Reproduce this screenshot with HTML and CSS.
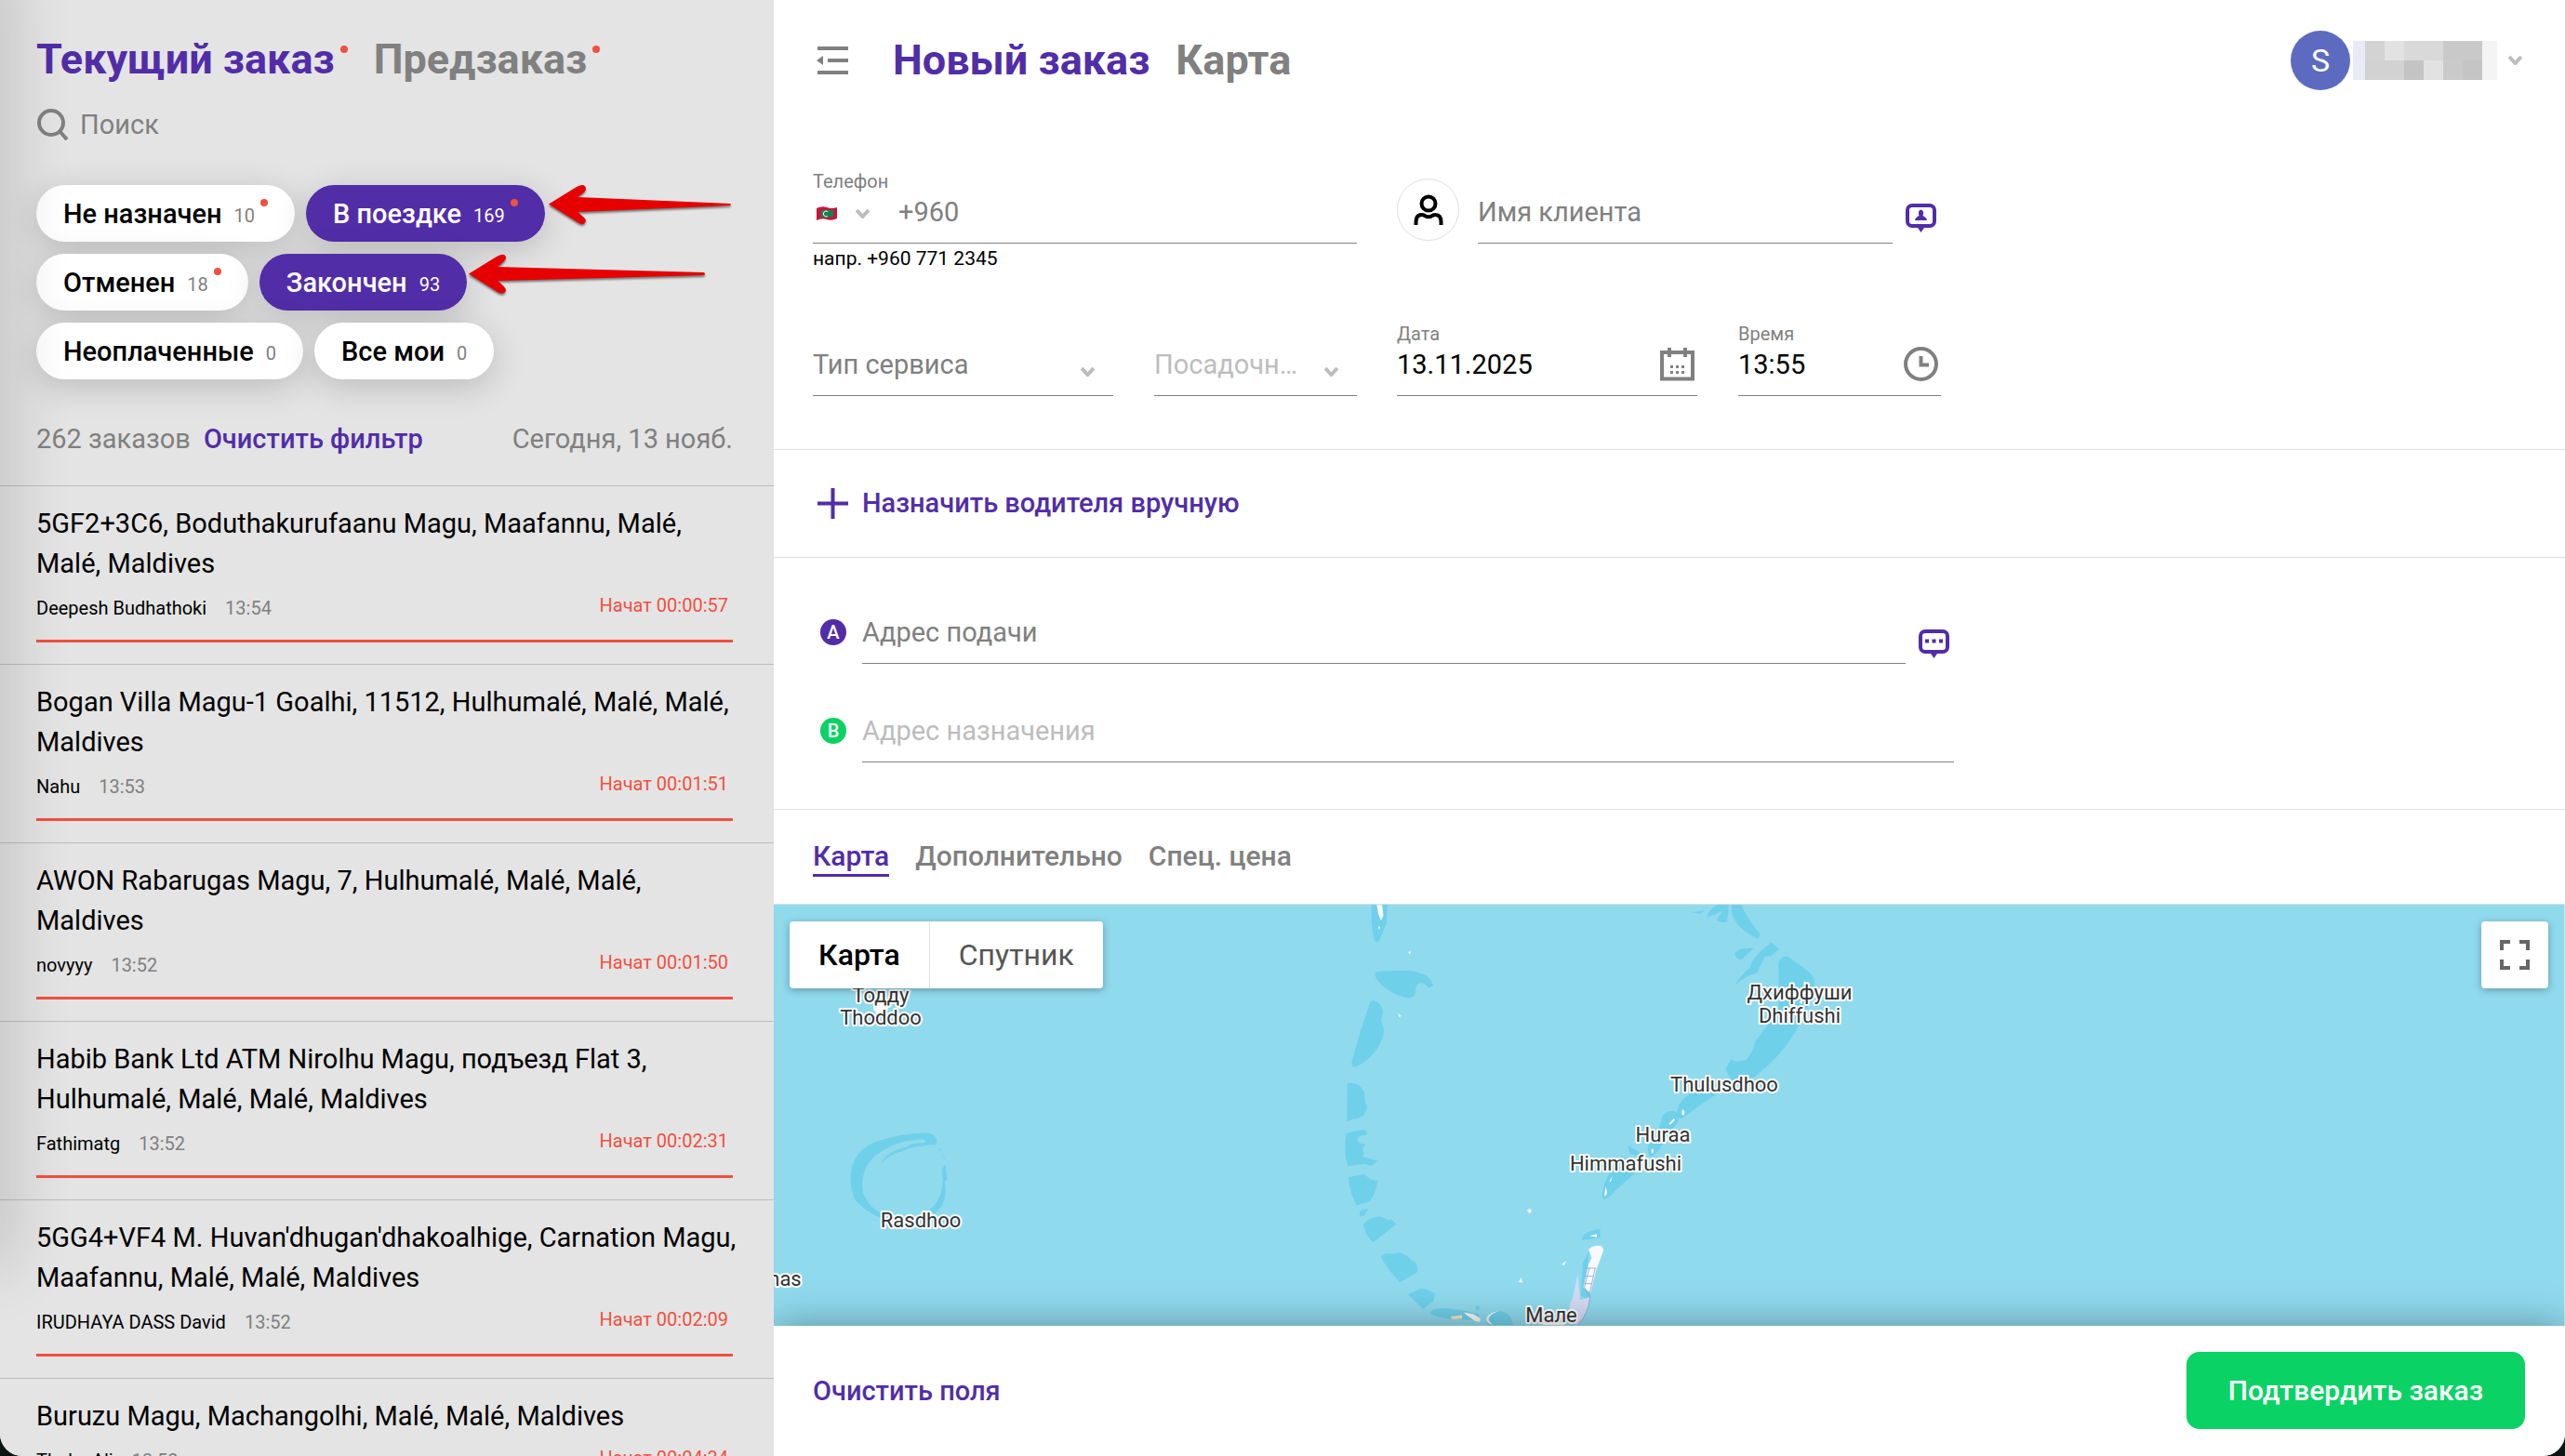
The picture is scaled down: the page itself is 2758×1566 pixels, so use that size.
FILE: index.html
```html
<!DOCTYPE html>
<html lang="ru">
<head>
<meta charset="utf-8">
<meta name="viewport" content="width=device-width, initial-scale=1">
<title>Новый заказ</title>
<link rel="stylesheet" href="styles.css">
</head>
<body>
<div class="app">
  <aside class="sidebar">
    <nav class="tabs sidebar-tabs">
      <a class="tab active" href="#current">Текущий заказ<i class="dot"></i></a>
      <a class="tab" href="#pre">Предзаказ<i class="dot"></i></a>
    </nav>
    <label class="search">
      <svg class="search-icon" viewBox="0 0 34 34"><circle cx="15" cy="15" r="13" /><path d="M24 24 L32 33" /></svg>
      <input class="search-input" type="text" placeholder="Поиск" aria-label="Поиск">
    </label>
    <div class="chips">
      <div class="chip-row">
        <button class="chip" type="button">Не назначен<span class="count">10</span><i class="dot"></i></button>
        <button class="chip selected" type="button">В поездке<span class="count">169</span><i class="dot"></i></button>
      </div>
      <div class="chip-row">
        <button class="chip" type="button">Отменен<span class="count">18</span><i class="dot"></i></button>
        <button class="chip selected" type="button">Закончен<span class="count">93</span></button>
      </div>
      <div class="chip-row">
        <button class="chip" type="button">Неоплаченные<span class="count">0</span></button>
        <button class="chip" type="button">Все мои<span class="count">0</span></button>
      </div>
      <svg class="arrows" viewBox="0 0 300 124">
        <g id="arrows">
          <path d="M101 20.500 L131 2 Q140 -3 141 4 Q141 7 132 13 L296 20 Q298 21 296 22 L132 29 Q141 36 141 38 Q139 45 132 40 Z" />
          <path d="M15 95.500 L45 77 Q54 72 55 78 Q55 81 46 88 L268 94 Q270 96 268 97 L46 103 Q55 110 55 113 Q53 119 46 115 Z" />
        </g>
      </svg>
    </div>
    <div class="summary">
      <span>262 заказов</span>
      <a class="link" href="#clear">Очистить фильтр</a>
      <span class="today">Сегодня, 13 нояб.</span>
    </div>
    <ul class="orders">
      <li class="order">
        <p class="address">5GF2+3C6, Boduthakurufaanu Magu, Maafannu, Malé, Malé, Maldives</p>
        <div class="meta"><span>Deepesh Budhathoki</span><time>13:54</time><span class="status">Начат 00:00:57</span></div>
        <div class="progress"></div>
      </li>
      <li class="order">
        <p class="address">Bogan Villa Magu-1 Goalhi, 11512, Hulhumalé, Malé, Malé, Maldives</p>
        <div class="meta"><span>Nahu</span><time>13:53</time><span class="status">Начат 00:01:51</span></div>
        <div class="progress"></div>
      </li>
      <li class="order">
        <p class="address">AWON Rabarugas Magu, 7, Hulhumalé, Malé, Malé, Maldives</p>
        <div class="meta"><span>novyyy</span><time>13:52</time><span class="status">Начат 00:01:50</span></div>
        <div class="progress"></div>
      </li>
      <li class="order">
        <p class="address">Habib Bank Ltd ATM Nirolhu Magu, подъезд Flat 3, Hulhumalé, Malé, Malé, Maldives</p>
        <div class="meta"><span>Fathimatg</span><time>13:52</time><span class="status">Начат 00:02:31</span></div>
        <div class="progress"></div>
      </li>
      <li class="order">
        <p class="address">5GG4+VF4 M. Huvan'dhugan'dhakoalhige, Carnation Magu, Maafannu, Malé, Malé, Maldives</p>
        <div class="meta"><span>IRUDHAYA DASS David</span><time>13:52</time><span class="status">Начат 00:02:09</span></div>
        <div class="progress"></div>
      </li>
      <li class="order">
        <p class="address">Buruzu Magu, Machangolhi, Malé, Malé, Maldives</p>
        <div class="meta"><span>Thoby Ali</span><time>13:52</time><span class="status">Начат 00:04:34</span></div>
        <div class="progress"></div>
      </li>
    </ul>
  </aside>

  <main class="main">
    <header class="topbar">
      <button class="icon-button" type="button" aria-label="Меню">
        <svg class="menu-icon" viewBox="0 0 34 30"><path d="M1 0H34V4H1Z M12 13H34V17H12Z M1 26H34V30H1Z M0 15L7 10V20Z" /></svg>
      </button>
      <nav class="tabs">
        <a class="tab active" href="#new">Новый заказ</a>
        <a class="tab" href="#map">Карта</a>
      </nav>
      <button class="account" type="button" aria-label="Аккаунт">
        <span class="avatar">S</span>
        <svg class="mosaic" viewBox="0 0 155 42" shape-rendering="crispEdges">
          <path fill="#e9e9f7" d="M0 0h13v21H0z"/><path fill="#e9ebf6" d="M0 21h13v21H0z"/>
          <path fill="#d3d3d3" d="M13 0h21v21H13z"/><path fill="#d2d2d2" d="M13 21h42v21H13z"/>
          <path fill="#e2e2e2" d="M34 0h21v21H34z"/><path fill="#d9d9d9" d="M55 0h42v21H55z"/>
          <path fill="#c4c4c4" d="M55 21h21v21H55z"/><path fill="#e2e2e2" d="M76 21h21v21H76z"/>
          <path fill="#c9c9c9" d="M97 0h42v21H97z"/><path fill="#cacaca" d="M97 21h21v21H97z"/>
          <path fill="#c5c5c5" d="M118 21h21v21h-21z"/><path fill="#f4f4f4" d="M139 0h16v42h-16z"/>
        </svg>
        <svg class="chevron" viewBox="0 0 15 10"><path d="M1 1 L7.500 8 L14 1" /></svg>
      </button>
    </header>

    <form class="form" id="order">
      <section class="section customer">
        <div class="field">
          <label class="label" for="phone">Телефон</label>
          <div class="control">
            <button class="country" type="button" aria-label="Страна">
              <svg class="flag" viewBox="0 0 22 16">
                <path fill="#c4163c" d="M0 2 Q6 -1 11 1 T22 1 L22 13 Q16 16 11 14 T0 15Z" />
                <path fill="#15824c" d="M5 4 Q11 4 18 4 L18 11 Q11 12 5 12Z" />
                <path fill="none" stroke="#fff" stroke-width="1" d="M12 5.500 A3 3 0 1 0 12 10.500" />
              </svg>
              <svg class="chevron" viewBox="0 0 15 10"><path d="M1 1 L7.500 8 L14 1" /></svg>
            </button>
            <input class="input" id="phone" type="tel" placeholder="+960">
          </div>
          <p class="hint">напр. +960 771 2345</p>
        </div>
        <div class="client">
          <span class="person"><svg class="person-icon" viewBox="0 0 32 34"><circle cx="16" cy="10" r="7.500" /><path d="M2.500 33V30Q2.500 22 8.500 22Q10.500 22 12 23Q16 25.500 20 23Q21.500 22 23.500 22Q29.500 22 29.500 30V33" /></svg></span>
          <div class="control grow">
            <input class="input" id="client" type="text" placeholder="Имя клиента" aria-label="Имя клиента">
          </div>
          <button class="icon-button note" type="button" aria-label="Комментарий о клиенте">
            <svg class="bubble" viewBox="0 0 33 31"><rect x="2" y="2" width="29" height="22" rx="5" /><path class="fill" d="M11 23H14L16.500 25.500L19 23H22L16.500 31Z M10 18Q10.500 15 14.500 13Q13.500 11 14 9Q14.500 6.500 16.500 6.500Q18.500 6.500 19 9Q19.500 11 18.500 13Q22.500 15 23 18Z" /></svg>
          </button>
        </div>
        <div class="pair">
          <div class="field">
            <span class="label"></span>
            <div class="control">
              <select class="input" id="service" aria-label="Тип сервиса"><option>Тип сервиса</option></select>
              <svg class="chevron drop" viewBox="0 0 15 10"><path d="M1 1 L7.500 8 L14 1" /></svg>
            </div>
          </div>
          <div class="field">
            <span class="label"></span>
            <div class="control">
              <select class="input pale" id="seats" aria-label="Посадочные места"><option>Посадочные места</option></select>
              <svg class="chevron drop" viewBox="0 0 15 10"><path d="M1 1 L7.500 8 L14 1" /></svg>
            </div>
          </div>
        </div>
        <div class="pair">
          <div class="field">
            <label class="label" for="date">Дата</label>
            <div class="control">
              <input class="input" id="date" type="text" value="13.11.2025">
              <svg class="field-icon" viewBox="0 0 37 37"><path class="line" d="M2 6H35V34.500H2Z" /><path d="M8 1H12V11H8Z M25 1H29V11H25Z M11 20h3v3h-3z M17 20h3v3h-3z M23 20h3v3h-3z M11 26h3v3h-3z M17 26h3v3h-3z M23 26h3v3h-3z" /></svg>
            </div>
          </div>
          <div class="field">
            <label class="label" for="time">Время</label>
            <div class="control">
              <input class="input" id="time" type="text" value="13:55">
              <svg class="field-icon" viewBox="0 0 37 37"><circle class="line" cx="18.500" cy="18.500" r="16.500" /><path class="line" d="M18.500 10V19.500H27" /></svg>
            </div>
          </div>
        </div>
      </section>

      <section class="section driver">
        <button class="assign" type="button">
          <svg class="plus" viewBox="0 0 33 33"><path d="M16.500 0V33 M0 16.500H33" /></svg>
          Назначить водителя вручную
        </button>
      </section>

      <section class="section route">
        <div class="stop">
          <span class="badge">A</span>
          <div class="control grow"><input class="input" id="pickup" type="text" placeholder="Адрес подачи" aria-label="Адрес подачи"></div>
          <button class="icon-button comment" type="button" aria-label="Комментарий">
            <svg class="bubble" viewBox="0 0 33 31"><rect x="2" y="2" width="29" height="22" rx="5" /><path class="fill" d="M11 23H14L16.500 25.500L19 23H22L16.500 31Z M7 10.500h4v4h-4z M14.500 10.500h4v4h-4z M22 10.500h4v4h-4z" /></svg>
          </button>
        </div>
        <div class="stop">
          <span class="badge finish">B</span>
          <div class="control grow"><input class="input pale" id="dropoff" type="text" placeholder="Адрес назначения" aria-label="Адрес назначения"></div>
        </div>
      </section>

      <nav class="section subtabs">
        <a class="subtab active" href="#m">Карта</a>
        <a class="subtab" href="#extra">Дополнительно</a>
        <a class="subtab" href="#price">Спец. цена</a>
      </nav>
    </form>

    <section class="map">
      <svg class="map-canvas" viewBox="832 973 1926 453" preserveAspectRatio="xMinYMin slice">
        <g class="reef" transform="translate(1400 970) scale(0.4464 0.3333)">
          <path d="M168 8H206L203 70L186 125Q178 134 174 122Q165 80 168 8Z" />
          <path d="M175 232Q180 220 215 223L260 222Q285 228 300 238Q312 252 316 270L304 278Q298 262 284 262Q272 268 274 290Q270 312 252 310Q220 298 205 282Q178 258 175 232Z" />
          <path d="M165 320Q182 314 192 340Q198 360 190 380L197 410Q198 440 180 475Q160 515 130 532Q118 536 120 515L140 420Z" />
          <path d="M109 585Q140 580 150 615L152 645L157 665L148 690L132 700L120 702L108 710Z" />
          <path d="M106 750Q125 738 150 736Q158 742 155 752Q135 752 132 768Q136 782 152 782Q142 800 150 812L146 822L182 835L168 852L150 846L110 853Q100 810 106 750Z" />
          <path d="M112 888L150 879L166 896L182 900Q178 945 162 966L132 980Q116 945 112 888Z" />
          <path d="M160 990L150 1012L140 1015Q136 1000 145 993Z" />
          <path d="M148 1045Q150 1022 188 1015L208 1026L214 1024L227 1040L172 1098Q154 1080 148 1045Z" />
          <path d="M190 1145Q198 1130 215 1136L235 1132Q255 1140 262 1155Q280 1160 278 1195L236 1228Q205 1185 190 1145Z" />
          <path d="M256 1267L286 1247Q305 1250 320 1265L316 1288L292 1314Q272 1290 256 1267Z" />
          <path d="M307 1328Q315 1308 350 1312L395 1320L425 1330L430 1352L350 1344Q325 1342 307 1328Z" />
          <path d="M442 1345Q448 1322 475 1320Q505 1325 508 1366L450 1366Q440 1358 442 1345Z M418 1304h10l-2 14h-6z" />
          <path d="M1003 10H1028L1024 64Q1012 70 998 60L1012 30L975 50Q980 20 1003 10Z M938 34L970 28L960 38Z M1034 10H1058Q1070 50 1104 105L1098 120Q1030 75 1034 10Z" />
          <path d="M1042 168Q1050 145 1088 150L1058 187Q1046 185 1042 168Z M1130 131L1150 152L1130 175L1115 176L1095 230Q1070 235 1042 270Q1058 235 1080 210Q1082 180 1130 131Z" />
          <path d="M1148 195Q1155 172 1170 176L1205 210Q1240 240 1234 270L1225 320L1190 415Q1160 490 1090 565L1020 600L960 655L915 700Q895 690 910 650Q925 620 960 600L1034 570Q1018 545 1022 535L1034 508L1045 515L1070 510Q1085 490 1092 450L1120 400L1148 350Z" />
          <path d="M868 690Q885 665 905 680Q915 705 890 735L860 800L840 825Q825 800 840 770Q862 740 868 690Z M784 784L820 815L812 824L790 812Z" />
          <path d="M770 820L815 860L760 925L735 958Q718 965 724 935Q728 890 770 820Z" />
          <path d="M675 1092Q672 1065 718 1056L718 1084Z M692 1125L676 1165L672 1270L695 1290L695 1250L676 1245L688 1182Z" />
        </g>
        <g class="land" transform="translate(1400 970) scale(0.4464 0.3333)">
          <path d="M180 10H193L196 45L190 60L184 40Z M183 80l5 0l-2 10z M255 162l7-2l-2 10z M231 360l8 8l-5 4z M916 668l6 8l-2 14l-6-6z M882 718l14-20l2 6l-10 14z M842 796l5 4l-2 12l-4-4z M728 945L732 918L735 940L731 950Z M740 902L747 886L744 902Z M542 995L549 989L554 998L548 1006Z M626 1168L636 1159L634 1168L630 1174Z M522 1226L528 1212L531 1230Z M692 1078L710 1072V1082Z M1210 255l8 12h-10z M1197 325l8-15v20z" />
          <path d="M690 1122Q700 1106 720 1110Q730 1116 722 1140L708 1190L695 1262L678 1245L690 1170L698 1148Z" />
          <path d="M390 1325L412 1330L430 1345L428 1356L415 1352L395 1332Z M445 1340Q452 1324 474 1320Q445 1335 450 1352L460 1366Q440 1360 445 1340Z M580 1358L632 1356V1366H580Z" />
          <path class="sand" d="M358 1338L385 1334L386 1345L362 1347Z" />
          <path class="airport" d="M664 1200L670 1285L694 1275Q690 1330 664 1366L640 1350L646 1295L652 1280Z" />
          <path class="road" d="M684 1182H708M682 1208H702M680 1232H698M692 1182L680 1245L694 1275Q690 1330 664 1366M706 1182L693 1262" />
        </g>
        <g class="reef" transform="translate(832 960) scale(0.3333 0.3865)">
          <path d="M346 906Q300 890 262 855Q248 830 248 790Q252 720 330 693Q420 668 500 669Q525 675 527 694L520 703Q500 700 480 706Q440 708 420 718Q370 728 344 755Q360 725 410 712Q440 706 440 700L490 696L484 686Q400 688 345 722Q290 750 285 810L288 836Q305 870 330 884L350 892Z M534 710l6 4l-1 8z M544 730l6 8l2 10z M542 770L554 756L559 800L552 802L554 835Q552 870 520 893L500 885Q535 860 542 828L546 800Z" />
        </g>
        <circle class="island" cx="947" cy="1083" r="8" />
        <g class="places">
          <text x="947" y="1078">Тодду</text>
          <text x="947" y="1102">Thoddoo</text>
          <text x="990" y="1320">Rasdhoo</text>
          <text x="844" y="1383">has</text>
          <text x="1935" y="1075">Дхиффуши</text>
          <text x="1935" y="1100">Dhiffushi</text>
          <text x="1854" y="1174">Thulusdhoo</text>
          <text x="1788" y="1228">Huraa</text>
          <text x="1748" y="1259">Himmafushi</text>
          <text x="1668" y="1422">Мале</text>
        </g>
      </svg>
      <div class="map-controls">
        <div class="map-types">
          <button class="map-type active" type="button">Карта</button>
          <button class="map-type" type="button">Спутник</button>
        </div>
        <button class="fullscreen" type="button" aria-label="Во весь экран">
          <svg class="fullscreen-icon" viewBox="0 0 32 32"><path d="M2 11V2H11 M21 2H30V11 M30 21V30H21 M11 30H2V21" /></svg>
        </button>
      </div>
    </section>

    <footer class="footer">
      <button class="reset" type="reset" form="order">Очистить поля</button>
      <button class="submit" type="submit" form="order">Подтвердить заказ</button>
    </footer>
  </main>
</div>
</body>
</html>
```

FILE: styles.css
```css
:root {
  --purple: #512da8;
  --gray: #808080;
  --red: #f05040;
  --line: #e0e0e0;
}

* {
  box-sizing: border-box;
}

html {
  background: #0c1512;
}

body {
  margin: 0;
  font-family: Roboto, "Liberation Sans", sans-serif;
  font-size: 29px;
  line-height: 40px;
  color: #000;
}

button,
input,
select {
  margin: 0;
  padding: 0;
  border: 0;
  background: none;
  font: inherit;
  color: inherit;
}

a {
  text-decoration: none;
  color: inherit;
}

p,
ul {
  margin: 0;
  padding: 0;
}

svg {
  display: block;
  flex: none;
}

.app {
  display: grid;
  grid-template-columns: minmax(600px, 832px) minmax(0, 1fr);
  height: 100vh;
  overflow: hidden;
  border-radius: 0 0 24px 24px;
  background: #fff;
}

/* Orders sidebar */

.sidebar {
  position: relative;
  overflow: hidden;
  padding-top: 38px;
  background: #e4e4e4;
}

.sidebar::after {
  content: "";
  position: absolute;
  left: -30px;
  top: -40px;
  width: 30px;
  height: 1400px;
  box-shadow: 0 0 70px rgba(0, 0, 0, 0.3);
}

.tabs {
  display: flex;
  gap: 28px;
  font-size: 45px;
  line-height: 52px;
  font-weight: 700;
}

.sidebar-tabs {
  padding: 0 39px;
}

.tab {
  display: flex;
  color: var(--gray);
}

.tab.active {
  color: var(--purple);
}

.dot {
  flex: none;
  width: 8px;
  height: 8px;
  border-radius: 50%;
  background: var(--red);
}

.tab .dot {
  margin: 11px 0 0 6px;
}

.search {
  display: flex;
  align-items: center;
  gap: 12px;
  margin: 24px 40px 0;
}

.search-icon {
  width: 34px;
  height: 34px;
  fill: none;
  stroke: var(--gray);
  stroke-width: 4;
}

.search-input {
  flex: 1;
  height: 40px;
}

::placeholder {
  color: var(--gray);
  opacity: 1;
}

.pale::placeholder {
  color: #bdbdbd;
}

.chips {
  position: relative;
  display: grid;
  gap: 13px;
  margin: 45px 39px 0;
}

.chip-row {
  display: flex;
  gap: 12px;
}

.chip {
  display: flex;
  align-items: center;
  height: 61px;
  padding: 0 29px;
  border-radius: 31px;
  background: #fff;
  box-shadow: 0 8px 36px rgba(0, 0, 0, 0.18);
  font-weight: 500;
}

.chip.selected {
  background: var(--purple);
  color: #fff;
}

.count {
  margin: 4px 0 0 13px;
  font-size: 20px;
  font-weight: 400;
  color: var(--gray);
}

.selected .count {
  color: #fff;
}

.chip .dot {
  margin: 0 0 24px 6px;
}

.arrows {
  position: absolute;
  left: 450px;
  top: 0;
  width: 300px;
  height: 124px;
  overflow: visible;
  fill: #e60000;
  filter: drop-shadow(0 2px 1px rgba(0, 0, 0, 0.5));
}

.summary {
  display: flex;
  gap: 14px;
  padding: 44px 44px 30px 39px;
  color: var(--gray);
}

.link {
  color: var(--purple);
  font-weight: 500;
}

.today {
  margin-left: auto;
}

.orders {
  list-style: none;
}

.order {
  padding: 19px 35px 23px 39px;
  border-top: 1px solid #bdbdbd;
}

.address {
  line-height: 43px;
}

.meta {
  display: flex;
  gap: 20px;
  margin-top: 14px;
  height: 24px;
  font-size: 20px;
  line-height: 24px;
}

.meta time {
  color: var(--gray);
}

.status {
  margin-left: auto;
  padding-right: 14px;
  line-height: 18px;
  color: var(--red);
}

.progress {
  height: 3px;
  margin: 22px 9px 0 0;
  background: var(--red);
}

/* Order form */

.main {
  display: flex;
  flex-direction: column;
  min-width: 0;
  min-height: 0;
  overflow: hidden;
}

.topbar {
  display: flex;
  align-items: center;
  height: 97px;
  padding: 33px 46px 0 46px;
}

.topbar .tabs {
  margin-left: 48px;
}

.menu-icon {
  width: 34px;
  height: 30px;
  fill: var(--gray);
}

.account {
  display: flex;
  align-items: center;
  margin-left: auto;
}

.avatar {
  width: 64px;
  height: 64px;
  border-radius: 50%;
  background: #5c6bc0;
  color: #fff;
  font-size: 34px;
  line-height: 64px;
  text-align: center;
}

.mosaic {
  width: 155px;
  height: 42px;
  margin: 0 12px 0 3px;
}

.chevron {
  width: 15px;
  height: 10px;
  fill: none;
  stroke: #bdbdbd;
  stroke-width: 4;
}

.section {
  padding: 0 42px;
  border-bottom: 1px solid var(--line);
}

.customer {
  display: grid;
  grid-template-columns: minmax(0, 585px) minmax(0, 585px);
  column-gap: 43px;
  row-gap: 56px;
  padding-top: 85px;
  padding-bottom: 57px;
}

.pair {
  display: grid;
  grid-template-columns: 323fr 218fr;
  gap: 44px;
}

.field {
  min-width: 0;
}

.label {
  display: block;
  height: 26px;
  font-size: 20px;
  line-height: 26px;
  color: var(--gray);
}

.control {
  position: relative;
  display: flex;
  height: 54px;
  border-bottom: 1px solid var(--gray);
}

.grow {
  flex: 1;
}

.input {
  flex: 1;
  min-width: 0;
  height: 40px;
  outline: 0;
}

select.input {
  appearance: none;
  padding-right: 50px;
  text-overflow: ellipsis;
  color: var(--gray);
}

select.pale {
  color: #bdbdbd;
}

.drop {
  position: absolute;
  right: 20px;
  top: 23px;
}

.hint {
  padding-top: 4px;
  font-size: 21px;
  line-height: 24px;
}

.country {
  display: flex;
  align-items: center;
  gap: 20px;
  height: 44px;
  padding: 0 31px 0 4px;
}

.flag {
  width: 22px;
  height: 16px;
}

.client {
  display: flex;
  align-items: flex-end;
  height: 80px;
}

.person {
  display: grid;
  place-items: center;
  width: 67px;
  height: 67px;
  margin: 0 20px 3px 0;
  border: 1px solid var(--line);
  border-radius: 50%;
}

.person-icon {
  width: 32px;
  height: 34px;
  fill: none;
  stroke: #000;
  stroke-width: 4;
}

.bubble {
  width: 33px;
  height: 31px;
  fill: none;
  stroke: var(--purple);
  stroke-width: 4;
}

.bubble .fill {
  fill: var(--purple);
  stroke: none;
}

.note {
  margin: 0 5px 12px 14px;
}

.comment {
  margin: 17px 5px 0 14px;
}

.field-icon {
  width: 37px;
  height: 37px;
  margin: 1px 3px 0 0;
  fill: var(--gray);
}

.field-icon .line {
  fill: none;
  stroke: var(--gray);
  stroke-width: 4;
}

.driver {
  padding: 37px 47px 38px;
}

.assign {
  display: flex;
  align-items: center;
  gap: 15px;
  font-weight: 500;
  color: var(--purple);
}

.plus {
  width: 33px;
  height: 33px;
  stroke: var(--purple);
  stroke-width: 4;
}

.route {
  display: grid;
  grid-template-columns: minmax(0, 1227px);
  gap: 52px;
  padding-top: 60px;
  padding-bottom: 50px;
}

.stop {
  display: flex;
  align-items: flex-start;
}

.badge {
  width: 28px;
  height: 28px;
  margin: 6px 17px 0 8px;
  border-radius: 50%;
  background: var(--purple);
  color: #fff;
  font-size: 20px;
  font-weight: 500;
  line-height: 28px;
  text-align: center;
}

.finish {
  background: #0ad264;
}

.subtabs {
  display: flex;
  gap: 28px;
  padding-top: 31px;
  padding-bottom: 29px;
  font-size: 30px;
  font-weight: 500;
  line-height: 38px;
  color: var(--gray);
}

.subtab {
  border-bottom: 3px solid transparent;
}

.subtab.active {
  border-color: var(--purple);
  color: var(--purple);
}

/* Map */

.map {
  position: relative;
  flex: 1;
  min-height: 0;
  overflow: hidden;
  border-right: 1px solid var(--line);
  background: #90daee;
}

.map-canvas {
  position: absolute;
  inset: 0;
  width: 100%;
  height: 100%;
}

.reef {
  fill: #6fd0ea;
}

.land,
.island {
  fill: #f8f9fa;
}

.sand {
  fill: #f2e7bf;
}

.airport {
  fill: #d3dcf5;
}

.road {
  fill: none;
  stroke: #8f9fc4;
  stroke-width: 2;
}

.places {
  fill: #333;
  stroke: #fff;
  stroke-width: 4;
  stroke-linejoin: round;
  paint-order: stroke;
  font-size: 22px;
  text-anchor: middle;
}

.map-controls {
  position: relative;
  display: flex;
  justify-content: space-between;
  padding: 18px 17px 0;
}

.map-types,
.fullscreen {
  height: 72px;
  border-radius: 4px;
  background: #fff;
  box-shadow: 0 2px 8px rgba(0, 0, 0, 0.3);
}

.map-types {
  display: flex;
}

.map-type {
  padding: 0 31px;
  font-size: 32px;
  color: #565656;
}

.map-type.active {
  border-right: 1px solid var(--line);
  font-weight: 500;
  color: #000;
}

.fullscreen {
  display: grid;
  place-items: center;
  width: 72px;
}

.fullscreen-icon {
  width: 32px;
  height: 32px;
  fill: none;
  stroke: #666;
  stroke-width: 4;
}

.footer {
  position: relative;
  display: flex;
  align-items: center;
  justify-content: space-between;
  padding: 28px 43px 29px 42px;
  background: #fff;
  box-shadow: 0 0 40px rgba(0, 0, 0, 0.35);
}

.reset {
  font-weight: 500;
  color: var(--purple);
}

.submit {
  height: 83px;
  padding: 0 45px;
  border-radius: 14px;
  background: #0ad264;
  color: #fff;
  font-size: 30px;
  font-weight: 500;
}
```
